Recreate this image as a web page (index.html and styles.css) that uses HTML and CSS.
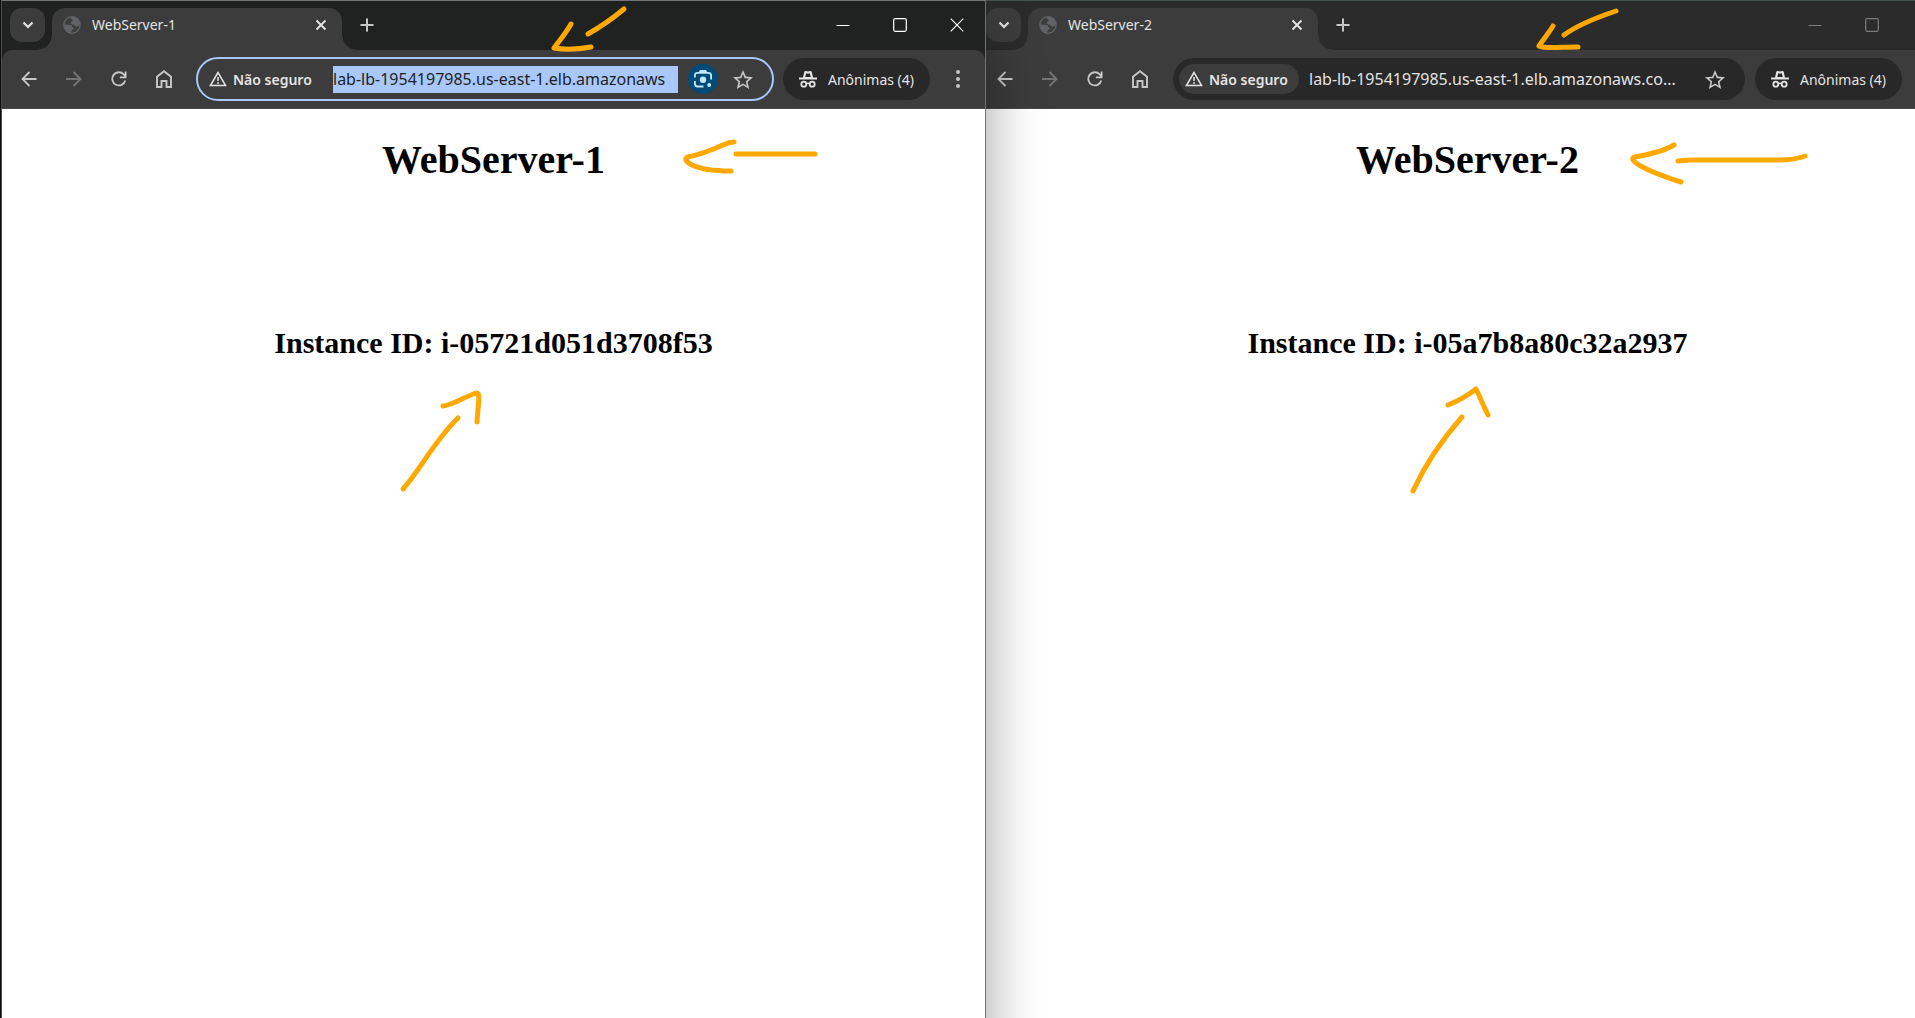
FILE: index.html
```html
<!DOCTYPE html>
<html lang="pt-BR">
<head>
<meta charset="utf-8">
<title>WebServer</title>
<link rel="stylesheet" href="styles.css">
</head>
<body>
<svg class="sprite" aria-hidden="true">
  <symbol id="chevron" viewBox="0 0 20 20"><path d="M5.500 7.500l4.500 4.500 4.500-4.500" fill="none" stroke="currentColor" stroke-width="2.200"/></symbol>
  <symbol id="globe" viewBox="0 0 18 18"><circle cx="9" cy="9" r="8.200" fill="none" stroke="currentColor" stroke-width="1.400"/><path d="M1 8.500l6 .2c1.600.2 2.300 1.100 2.200 2.500l1.500.1v1.900c-1.400.1-2.100.7-2.300 2.200l-.2 2C4 17 1 13.500 1 8.500zM8 1.200c4-.7 8.500 2 9 6.600-.5 2.200-1.600 3-3.300 2.600-1.700-.3-2.200-1.500-3.600-1.700-1.700-.3-2.600-.9-2.500-2.200.2-1.200 1.300-1.300 2.500-1.600C9.200 4 8 3.200 8 1.200z" fill="currentColor"/></symbol>
  <symbol id="close" viewBox="0 0 12 12"><path d="M1.500 1.500l9 9M10.500 1.500l-9 9" fill="none" stroke="currentColor" stroke-width="1.900"/></symbol>
  <symbol id="plus" viewBox="0 0 14 14"><path d="M7 .5v13M.5 7h13" fill="none" stroke="currentColor" stroke-width="2"/></symbol>
  <symbol id="min" viewBox="0 0 14 14"><path d="M.5 7.500h13" stroke="currentColor"/></symbol>
  <symbol id="max" viewBox="0 0 14 14"><rect x=".7" y=".7" width="12.600" height="12.600" rx="1.500" fill="none" stroke="currentColor" stroke-width="1.200"/></symbol>
  <symbol id="quit" viewBox="0 0 14 14"><path d="M.7.7l12.600 12.600M13.300.7L.7 13.300" fill="none" stroke="currentColor" stroke-width="1.200"/></symbol>
  <symbol id="back" viewBox="0 0 16 16"><path d="M15.500 8H2M8.500 1L1.500 8l7 7" fill="none" stroke="currentColor" stroke-width="1.800"/></symbol>
  <symbol id="forward" viewBox="0 0 16 16"><path d="M0 8h14M7.500 1l7 7-7 7" fill="none" stroke="currentColor" stroke-width="1.800"/></symbol>
  <symbol id="reload" viewBox="0 0 16 16"><path d="M14.300 9.500A6.600 6.600 0 1 1 12.800 3.400L14.500 5.500M14.600.5v5.800H8.800" fill="none" stroke="currentColor" stroke-width="1.800"/></symbol>
  <symbol id="home" viewBox="0 0 16 18"><path d="M1 6.700L8 1.200l7 5.500V17h-4.500v-6h-5v6H1z" fill="none" stroke="currentColor" stroke-width="1.900"/></symbol>
  <symbol id="warning" viewBox="0 0 18 16"><path d="M9 1.500L1.400 14.600h15.200z" fill="none" stroke="currentColor" stroke-width="1.500"/><path d="M9 6v4M9 11.300v1.700" stroke="currentColor" stroke-width="1.500"/></symbol>
  <symbol id="lens" viewBox="0 0 20 20"><path d="M1.900 8.500V6.500c0-1.800.9-2.700 2.700-2.700h10.800c1.800 0 2.700.9 2.700 2.700V10.500M1.900 12v2.800c0 1.800.9 2.700 2.700 2.700H10.500" fill="none" stroke="currentColor" stroke-width="1.800"/><path d="M5.500 3.500L7 1h6l1.500 2.500z" fill="currentColor"/><circle cx="10" cy="10.700" r="3.200" fill="currentColor"/><circle cx="16.200" cy="16" r="2" fill="currentColor"/></symbol>
  <symbol id="star" viewBox="2 2 20 19"><path d="M22 9.240l-7.190-.62L12 2 9.190 8.630 2 9.240l5.460 4.730L5.820 21 12 17.270 18.180 21l-1.630-7.030L22 9.240zM12 15.400l-3.760 2.270 1-4.280-3.320-2.880 4.380-.38L12 6.100l1.710 4.040 4.380.38-3.320 2.880 1 4.280L12 15.400z" fill="currentColor"/></symbol>
  <symbol id="incognito" viewBox="0 0 18 18"><path d="M4 7.500L5.300 1.800c.2-.8.800-1.100 1.600-.8.800.3 1.300.5 2.100.5s1.300-.2 2.100-.5c.8-.3 1.400 0 1.600.8L14 7.500h4v1.900H0V7.500z" fill="currentColor"/><path d="M6.300 6.900h5.400l-.9-3.600c-1.100.5-2.500.5-3.600 0z" fill="#282828"/><circle cx="4.800" cy="14.200" r="2.500" fill="none" stroke="currentColor" stroke-width="1.800"/><circle cx="13.200" cy="14.200" r="2.500" fill="none" stroke="currentColor" stroke-width="1.800"/><path d="M7.200 13.800c1.200-.7 2.400-.7 3.600 0" fill="none" stroke="currentColor" stroke-width="1.600"/></symbol>
  <symbol id="kebab" viewBox="0 0 4 18"><circle cx="2" cy="2" r="2" fill="currentColor"/><circle cx="2" cy="9" r="2" fill="currentColor"/><circle cx="2" cy="16" r="2" fill="currentColor"/></symbol>
</svg>

<main class="desktop">
  <section class="window window-active">
    <header class="tabstrip">
      <button class="tab-search" aria-label="Pesquisar guias"><svg width="20" height="20"><use href="#chevron"/></svg></button>
      <div class="tab">
        <svg class="favicon" width="18" height="18"><use href="#globe"/></svg>
        <span class="tab-title">WebServer-1</span>
        <button class="tab-close" aria-label="Fechar guia"><svg width="12" height="12"><use href="#close"/></svg></button>
      </div>
      <button class="new-tab" aria-label="Nova guia"><svg width="14" height="14"><use href="#plus"/></svg></button>
      <div class="controls">
        <button aria-label="Minimizar"><svg width="14" height="14"><use href="#min"/></svg></button>
        <button aria-label="Maximizar"><svg width="14" height="14"><use href="#max"/></svg></button>
        <button aria-label="Fechar"><svg width="14" height="14"><use href="#quit"/></svg></button>
      </div>
    </header>
    <div class="toolbar-bed">
      <nav class="toolbar">
        <button class="tool" aria-label="Voltar"><svg width="16" height="16"><use href="#back"/></svg></button>
        <button class="tool tool-off" aria-label="Avançar"><svg width="16" height="16"><use href="#forward"/></svg></button>
        <button class="tool" aria-label="Recarregar"><svg width="16" height="16"><use href="#reload"/></svg></button>
        <button class="tool" aria-label="Página inicial"><svg width="16" height="18"><use href="#home"/></svg></button>
        <div class="omnibox omnibox-focus">
          <button class="chip"><svg width="18" height="16"><use href="#warning"/></svg>Não seguro</button>
          <input class="url url-selected" type="text" aria-label="Endereço" value="lab-lb-1954197985.us-east-1.elb.amazonaws">
          <button class="lens" aria-label="Pesquisar com o Google Lens"><svg width="20" height="20"><use href="#lens"/></svg></button>
          <button class="star" aria-label="Favoritar"><svg width="20" height="19"><use href="#star"/></svg></button>
        </div>
        <button class="profile"><svg width="18" height="18"><use href="#incognito"/></svg>Anônimas (4)</button>
        <button class="tool" aria-label="Menu"><svg width="4" height="18"><use href="#kebab"/></svg></button>
      </nav>
    </div>
    <article class="page">
      <h1>WebServer-1</h1>
      <h2>Instance ID: i-05721d051d3708f53</h2>
    </article>
  </section>

  <section class="window window-behind">
    <header class="tabstrip">
      <button class="tab-search" aria-label="Pesquisar guias"><svg width="20" height="20"><use href="#chevron"/></svg></button>
      <div class="tab">
        <svg class="favicon" width="18" height="18"><use href="#globe"/></svg>
        <span class="tab-title">WebServer-2</span>
        <button class="tab-close" aria-label="Fechar guia"><svg width="12" height="12"><use href="#close"/></svg></button>
      </div>
      <button class="new-tab" aria-label="Nova guia"><svg width="14" height="14"><use href="#plus"/></svg></button>
      <div class="controls">
        <button aria-label="Minimizar"><svg width="14" height="14"><use href="#min"/></svg></button>
        <button aria-label="Maximizar"><svg width="14" height="14"><use href="#max"/></svg></button>
        <button aria-label="Fechar"><svg width="14" height="14"><use href="#quit"/></svg></button>
      </div>
    </header>
    <div class="toolbar-bed">
      <nav class="toolbar">
        <button class="tool" aria-label="Voltar"><svg width="16" height="16"><use href="#back"/></svg></button>
        <button class="tool tool-off" aria-label="Avançar"><svg width="16" height="16"><use href="#forward"/></svg></button>
        <button class="tool" aria-label="Recarregar"><svg width="16" height="16"><use href="#reload"/></svg></button>
        <button class="tool" aria-label="Página inicial"><svg width="16" height="18"><use href="#home"/></svg></button>
        <div class="omnibox">
          <button class="chip"><svg width="18" height="16"><use href="#warning"/></svg>Não seguro</button>
          <input class="url" type="text" aria-label="Endereço" value="lab-lb-1954197985.us-east-1.elb.amazonaws.co...">
          <button class="star" aria-label="Favoritar"><svg width="20" height="19"><use href="#star"/></svg></button>
        </div>
        <button class="profile"><svg width="18" height="18"><use href="#incognito"/></svg>Anônimas (4)</button>
        <button class="tool" aria-label="Menu"><svg width="4" height="18"><use href="#kebab"/></svg></button>
      </nav>
    </div>
    <article class="page">
      <h1>WebServer-2</h1>
      <h2>Instance ID: i-05a7b8a80c32a2937</h2>
    </article>
  </section>

  <svg class="ink" viewBox="0 0 1915 1018" aria-hidden="true">
    <path d="M624 9C612 19 602 26 588 34M571 24C566 33 560 40 554 48C566 50 580 49 591 47"/>
    <path d="M815 154H736M734 142C730 142 727 143 723 145C712 150 702 154 688 157C681 159 690 171 731 171"/>
    <path d="M403 489C420 470 435 440 458 418M443 406C453 405 462 398 476 393C481 392 478 404 477 422"/>
    <path d="M1616 11C1598 17 1579 24 1564 35M1553 26C1548 34 1543 40 1539 46C1544 49 1560 47 1578 47"/>
    <path d="M1805 156C1797 159 1787 160 1780 160H1690C1685 160 1682 161 1678 161M1674 145C1664 151 1652 154 1635 157C1627 159 1640 169 1681 182"/>
    <path d="M1413 491C1425 465 1439 443 1462 417M1448 405C1458 401 1467 396 1476 389C1480 397 1483 405 1488 415"/>
  </svg>
</main>
</body>
</html>
```
FILE: styles.css
```css
* { box-sizing: border-box; }

body {
  margin: 0;
  font-family: "Noto Sans", "Open Sans", sans-serif;
}

button {
  display: flex;
  align-items: center;
  justify-content: center;
  padding: 0;
  border: 0;
  background: none;
  color: inherit;
  font: inherit;
}

svg { flex: none; display: block; }

.sprite { display: none; }

.desktop {
  position: relative;
  display: flex;
  height: 100vh;
  padding-left: 1px;
  overflow: hidden;
  background: #101010;
}

.window {
  --strip: #202221;
  display: flex;
  flex-direction: column;
  min-height: calc(100vh + 80px);
  border: 1px solid #707475;
  background: #fff;
  color: #e3e3e3;
}

.window-active {
  position: relative;
  z-index: 1;
  flex: 0 0 calc(50% + 28px);
  border-left-color: #4a4d4e;
  box-shadow: 0 40px 52px rgba(0, 0, 0, 0.38);
}

.window-behind {
  --strip: #2b2b2b;
  flex: 0 0 calc(50% + 24px);
  margin-left: -9px;
  border-top-color: #4b5254;
}

.tabstrip {
  display: flex;
  align-items: flex-start;
  gap: 7px;
  height: 49px;
  padding: 7px 0 0 8px;
  background: var(--strip);
}

.tab-search {
  width: 35px;
  height: 34px;
  border-radius: 12px;
  background: #3c3c3c;
}

.tab {
  position: relative;
  display: flex;
  align-items: center;
  gap: 11px;
  width: 290px;
  height: 42px;
  padding: 0 15px 8px 11px;
  border-radius: 13px 13px 0 0;
  background: #3c3c3c;
  font-size: 14px;
  line-height: 20px;
}

.tab::before,
.tab::after {
  content: "";
  position: absolute;
  bottom: 0;
  width: 14px;
  height: 14px;
}

.tab::before {
  right: 100%;
  background: radial-gradient(circle at 0 0, transparent 13px, #3c3c3c 14px);
}

.tab::after {
  left: 100%;
  background: radial-gradient(circle at 100% 0, transparent 13px, #3c3c3c 14px);
}

.favicon { color: #5f6368; }

.tab-title { flex: 1; }

.new-tab {
  width: 35px;
  height: 34px;
  color: #c7c7c7;
}

.controls {
  display: flex;
  margin-left: auto;
  color: #fff;
}

.controls button {
  width: 57px;
  height: 34px;
}

.window-behind .controls { color: #7d7d7d; }

.toolbar-bed { background: var(--strip); }

.toolbar {
  display: flex;
  align-items: center;
  gap: 10px;
  height: 59px;
  padding: 0 10px 0 9px;
  border-bottom: 1px solid #484848;
  border-radius: 10px 10px 0 0;
  background: #3c3c3c;
}

.tool {
  width: 35px;
  height: 35px;
  color: #c7c7c7;
}

.tool-off { color: #757575; }

.omnibox {
  display: flex;
  flex: 1;
  align-items: center;
  gap: 10px;
  min-width: 0;
  height: 42px;
  margin-left: 6px;
  padding: 0 15px 0 6px;
  border-radius: 21px;
  background: #282828;
}

.omnibox-focus {
  outline: 2px solid #a8c7fa;
  outline-offset: -1px;
  background: #3c3c3c;
}

.chip {
  flex: none;
  justify-content: flex-start;
  gap: 6px;
  width: 120px;
  height: 30px;
  padding-left: 6px;
  border-radius: 15px;
  background: #3c3c3c;
  font-size: 14px;
  font-weight: 600;
}

.url {
  flex: 1;
  min-width: 0;
  height: 27px;
  padding: 0;
  border: 0;
  background: none;
  color: #e3e3e3;
  font: 16px/27px "Noto Sans", "Open Sans", sans-serif;
}

.url-selected {
  background: #a8c7fa;
  color: #1f1f1f;
}

.lens {
  width: 30px;
  height: 30px;
  border-radius: 15px;
  background: #004a77;
  color: #c2e7ff;
}

.star {
  width: 30px;
  height: 30px;
  color: #c7c7c7;
}

.profile {
  flex: none;
  gap: 11px;
  width: 147px;
  height: 42px;
  border-radius: 21px;
  background: #282828;
  font-size: 14px;
}

.page {
  flex: 1;
  padding: 28px 10px;
  color: #000;
  font-family: "Liberation Serif", "Times New Roman", serif;
  text-align: center;
}

.page h1 {
  margin: 0 0 143px;
  font-size: 40px;
  line-height: 46px;
}

.page h2 {
  margin: 0;
  font-size: 30px;
  line-height: 34px;
}

.ink {
  position: absolute;
  z-index: 2;
  top: 0;
  left: 0;
  width: 100%;
  fill: none;
  stroke: #ffa800;
  stroke-width: 5;
  stroke-linecap: round;
  stroke-linejoin: round;
  pointer-events: none;
}
```
